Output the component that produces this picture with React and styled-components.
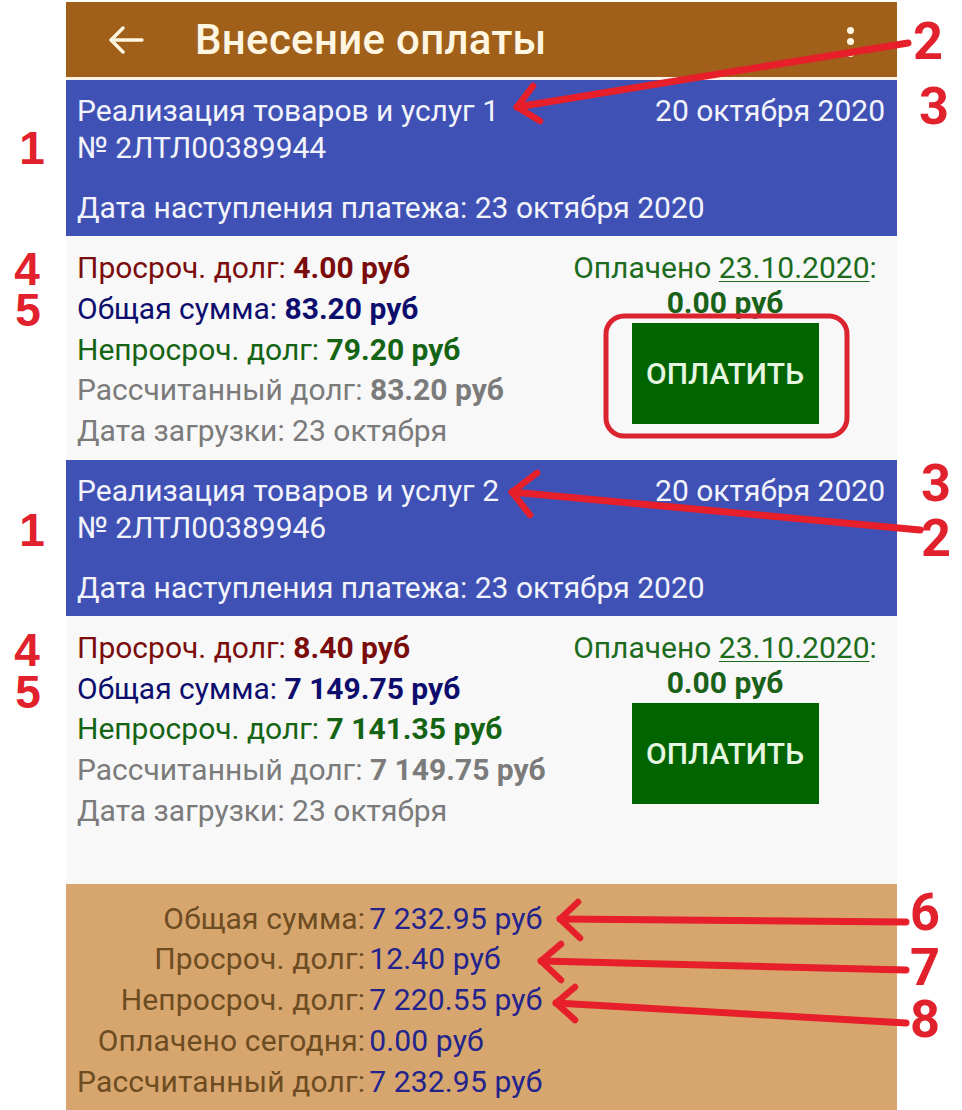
import React from "react";
import styled, { createGlobalStyle } from "styled-components";

const documents = [
  {
    title: "Реализация товаров и услуг 1",
    number: "№ 2ЛТЛ00389944",
    date: "20 октября 2020",
    due: "23 октября 2020",
    overdue: "4.00 руб",
    total: "83.20 руб",
    current: "79.20 руб",
    calculated: "83.20 руб",
    loaded: "23 октября",
    paidDate: "23.10.2020",
    paid: "0.00 руб",
  },
  {
    title: "Реализация товаров и услуг 2",
    number: "№ 2ЛТЛ00389946",
    date: "20 октября 2020",
    due: "23 октября 2020",
    overdue: "8.40 руб",
    total: "7 149.75 руб",
    current: "7 141.35 руб",
    calculated: "7 149.75 руб",
    loaded: "23 октября",
    paidDate: "23.10.2020",
    paid: "0.00 руб",
    last: true,
  },
];

const totals = [
  ["Общая сумма:", "7 232.95 руб"],
  ["Просроч. долг:", "12.40 руб"],
  ["Непросроч. долг:", "7 220.55 руб"],
  ["Оплачено сегодня:", "0.00 руб"],
  ["Рассчитанный долг:", "7 232.95 руб"],
];

// red marks drawn over the screenshot
const arrows = [
  { line: "M908 43 L517 107", head: "M533 86 L517 107 L540 121" },
  { line: "M920 530 L512 492", head: "M537 473 L512 492 L530 515" },
  { line: "M906 922 L560 919", head: "M578 902 L560 919 L580 938" },
  { line: "M906 970 L541 961", head: "M561 944 L541 961 L561 980" },
  { line: "M906 1023 L556 1003", head: "M575 987 L556 1003 L575 1020" },
];

const leftMarks = [
  { n: "1", x: 32, y: 164 },
  { n: "4", x: 27, y: 285 },
  { n: "5", x: 28, y: 326 },
  { n: "1", x: 32, y: 546 },
  { n: "4", x: 27, y: 666 },
  { n: "5", x: 28, y: 708 },
];

const rightMarks = [
  { n: "2", x: 928, y: 59 },
  { n: "3", x: 934, y: 124 },
  { n: "3", x: 936, y: 501 },
  { n: "2", x: 936, y: 556 },
  { n: "6", x: 925, y: 930 },
  { n: "7", x: 925, y: 985 },
  { n: "8", x: 925, y: 1037 },
];

const GlobalStyle = createGlobalStyle`
  html, body {
    margin: 0;
    padding: 0;
    background: #ffffff;
  }
  body {
    font-family: Roboto, "Noto Sans", sans-serif;
  }
`;

const Page = styled.div`
  position: relative;
  width: 962px;
  height: 1110px;
  overflow: hidden;
  padding-top: 2px;
  box-sizing: border-box;
`;

const Screen = styled.div`
  margin-left: 66px;
  width: 831px;
  display: flex;
  flex-direction: column;
`;

const Toolbar = styled.header`
  height: 75px;
  background: #a0601a;
  border-bottom: 3px solid #fbf3e6;
  display: flex;
  align-items: center;
  color: #fff6e2;
`;

const BackIcon = styled.svg`
  margin-left: 42px;
  width: 36px;
  height: 28px;
`;

const Title = styled.h1`
  margin: 0 0 0 51px;
  font-size: 42px;
  font-weight: 500;
  letter-spacing: 0.3px;
`;

const Kebab = styled.div`
  margin-left: auto;
  margin-right: 43px;
  display: flex;
  flex-direction: column;
  gap: 4.5px;
  padding-top: 4px;

  span {
    width: 7px;
    height: 7px;
    border-radius: 50%;
    background: #fff6e2;
  }
`;

const DocHeader = styled.div`
  background: #3f51b5;
  color: #f3f4fb;
  font-size: 30px;
  line-height: 37px;
  padding: 12px 12px 10px 11px;
`;

const DocRow = styled.div`
  display: flex;
  justify-content: space-between;
  margin-top: ${(p) => (p.$gap ? "23px" : "0")};
`;

const Card = styled.div`
  background: #f8f8f8;
  display: flex;
  justify-content: space-between;
  padding: 12px 12px ${(p) => (p.$last ? "52px" : "8px")} 11px;
  font-size: 30px;
  line-height: 40.75px;
`;

const Lines = styled.div`
  display: flex;
  flex-direction: column;
`;

const Line = styled.div`
  color: ${(p) => p.$color};

  b {
    font-weight: 700;
  }
`;

const PayColumn = styled.div`
  width: 320px;
  display: flex;
  flex-direction: column;
  align-items: center;
  color: #1d6b1d;
`;

const PaidDate = styled.span`
  text-decoration: underline;
  text-underline-offset: 3px;
  text-decoration-thickness: 1px;
`;

const PaidSum = styled.div`
  font-weight: 700;
  line-height: 28px;
  color: #1a621a;
`;

const PayButton = styled.button`
  margin-top: 6px;
  width: 187px;
  height: 101px;
  border: none;
  border-radius: 0;
  background: #006400;
  color: #e6f6e0;
  font-family: Roboto, "Noto Sans", sans-serif;
  font-size: 30px;
  font-weight: 500;
  cursor: pointer;
`;

const Totals = styled.div`
  background: #d7a66e;
  padding: 15px 0 38px 11px;
  display: grid;
  grid-template-columns: max-content max-content;
  column-gap: 4px;
  font-size: 30px;
  line-height: 40.75px;
  letter-spacing: 0.15px;
`;

const TotalLabel = styled.div`
  text-align: right;
  color: #6d4c22;
`;

const TotalValue = styled.div`
  color: #23238c;
`;

const Marks = styled.svg`
  position: absolute;
  left: 0;
  top: 0;
  width: 962px;
  height: 1110px;
  pointer-events: none;
`;

const MarkText = styled.text`
  font-family: ${(p) => (p.$narrow ? "Roboto" : '"Liberation Sans"')}, sans-serif;
  font-weight: 700;
  font-size: ${(p) => (p.$narrow ? "52px" : "46px")};
  fill: #e1212b;
`;

const Document = ({ doc }) => (
  <>
    <DocHeader>
      <DocRow>
        <span>{doc.title}</span>
        <span>{doc.date}</span>
      </DocRow>
      <DocRow>{doc.number}</DocRow>
      <DocRow $gap>Дата наступления платежа: {doc.due}</DocRow>
    </DocHeader>
    <Card $last={doc.last}>
      <Lines>
        <Line $color="#7a0c0c">
          Просроч. долг: <b>{doc.overdue}</b>
        </Line>
        <Line $color="#0d0d6e">
          Общая сумма: <b>{doc.total}</b>
        </Line>
        <Line $color="#146414">
          Непросроч. долг: <b>{doc.current}</b>
        </Line>
        <Line $color="#7b7b7b">
          Рассчитанный долг: <b>{doc.calculated}</b>
        </Line>
        <Line $color="#7b7b7b">Дата загрузки: {doc.loaded}</Line>
      </Lines>
      <PayColumn>
        <div>
          Оплачено <PaidDate>{doc.paidDate}</PaidDate>:
        </div>
        <PaidSum>{doc.paid}</PaidSum>
        <PayButton>ОПЛАТИТЬ</PayButton>
      </PayColumn>
    </Card>
  </>
);

export default function App() {
  return (
    <Page>
      <GlobalStyle />
      <Screen>
        <Toolbar>
          <BackIcon viewBox="0 0 36 28" fill="none" stroke="currentColor" strokeWidth="3.4" strokeLinecap="round" strokeLinejoin="round">
            <path d="M34 14H3M15 2L3 14l12 12" />
          </BackIcon>
          <Title>Внесение оплаты</Title>
          <Kebab>
            <span />
            <span />
            <span />
          </Kebab>
        </Toolbar>
        {documents.map((doc) => (
          <Document key={doc.number} doc={doc} />
        ))}
        <Totals>
          {totals.map(([label, value]) => (
            <React.Fragment key={label}>
              <TotalLabel>{label}</TotalLabel>
              <TotalValue>{value}</TotalValue>
            </React.Fragment>
          ))}
        </Totals>
      </Screen>
      <Marks viewBox="0 0 962 1110">
        <rect x="606" y="316" width="241" height="120" rx="18" fill="none" stroke="#dc2431" strokeWidth="5" />
        {arrows.map((a, i) => (
          <g key={i} fill="none" stroke="#e61f2a" strokeLinecap="round" strokeLinejoin="round">
            <path d={a.line} strokeWidth="7" />
            <path d={a.head} strokeWidth="6.5" />
          </g>
        ))}
        {leftMarks.map((m, i) => (
          <MarkText key={"l" + i} x={m.x} y={m.y} textAnchor="middle">
            {m.n}
          </MarkText>
        ))}
        {rightMarks.map((m, i) => (
          <MarkText key={"r" + i} $narrow x={m.x - 15} y={m.y} textLength="30" lengthAdjust="spacingAndGlyphs">
            {m.n}
          </MarkText>
        ))}
      </Marks>
    </Page>
  );
}
